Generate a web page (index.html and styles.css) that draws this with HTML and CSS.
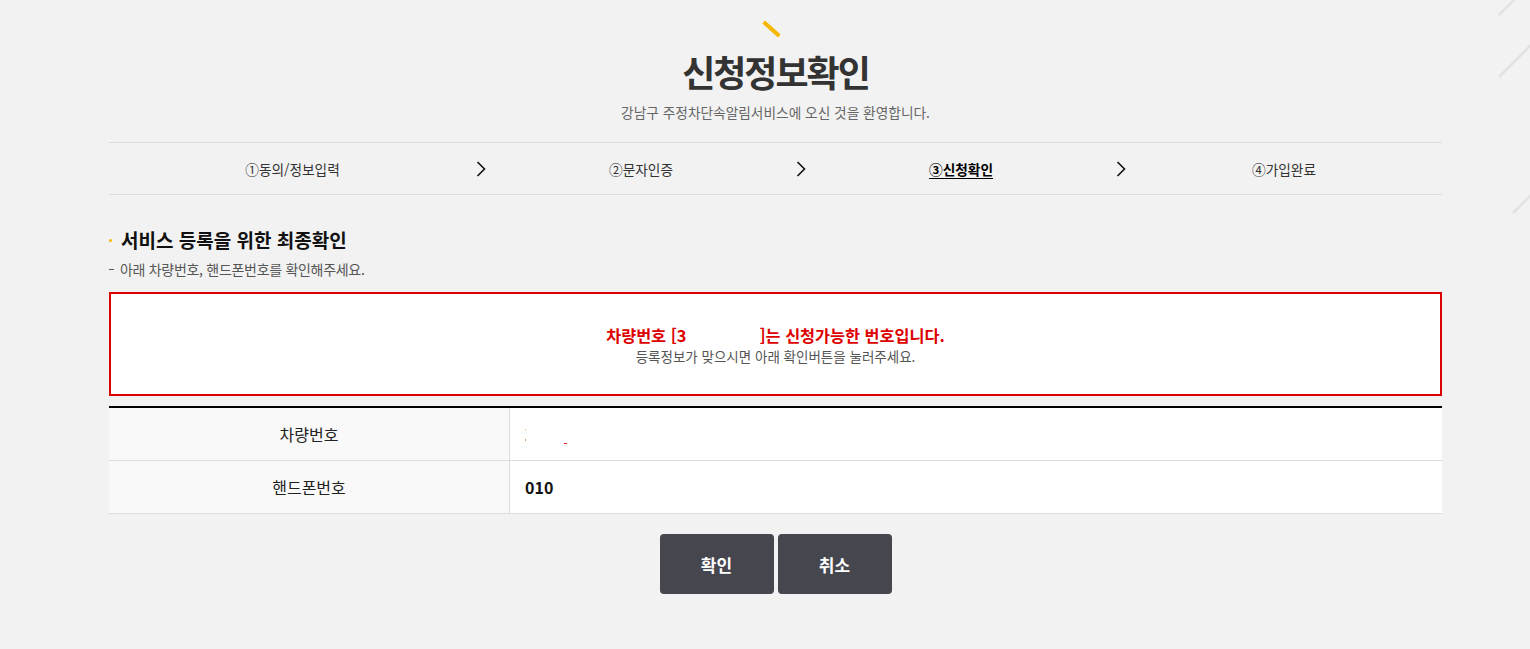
FILE: index.html
```html
<!DOCTYPE html>
<html lang="ko">
<head>
    <meta charset="UTF-8">
    <meta name="viewport" content="width=device-width, initial-scale=1.0">
    <title>신청정보확인</title>
    <link rel="stylesheet" href="styles.css">
</head>
<body>
    <svg class="deco" width="60" height="240" viewBox="0 0 60 240">
        <line x1="29" y1="15" x2="47" y2="-3" />
        <line x1="29" y1="77" x2="65" y2="41" />
        <line x1="43" y1="213" x2="65" y2="191" />
    </svg>

    <div class="wrap">
        <div class="page-head">
            <span class="slash"></span>
            <h1>신청정보확인</h1>
            <p class="welcome">강남구 주정차단속알림서비스에 오신 것을 환영합니다.</p>
        </div>

        <div class="steps">
            <span class="step">①동의/정보입력</span>
            <span class="arrow"><svg width="10" height="16" viewBox="0 0 10 16"><path d="M1.5 1 L8.5 8 L1.5 15" /></svg></span>
            <span class="step">②문자인증</span>
            <span class="arrow"><svg width="10" height="16" viewBox="0 0 10 16"><path d="M1.5 1 L8.5 8 L1.5 15" /></svg></span>
            <span class="step on">③신청확인</span>
            <span class="arrow"><svg width="10" height="16" viewBox="0 0 10 16"><path d="M1.5 1 L8.5 8 L1.5 15" /></svg></span>
            <span class="step">④가입완료</span>
        </div>

        <h2 class="sec-title">서비스 등록을 위한 최종확인</h2>
        <p class="sec-desc">아래 차량번호, 핸드폰번호를 확인해주세요.</p>

        <div class="notice">
            <p class="notice-main">차량번호 [3<span class="mask"></span>]는 신청가능한 번호입니다.</p>
            <p class="notice-sub">등록정보가 맞으시면 아래 확인버튼을 눌러주세요.</p>
        </div>

        <table class="info">
            <tr>
                <th>차량번호</th>
                <td><span class="speck s1"></span><span class="speck s2"></span><span class="speck s3"></span></td>
            </tr>
            <tr>
                <th>핸드폰번호</th>
                <td class="num">010</td>
            </tr>
        </table>

        <div class="btns">
            <button class="btn">확인</button>
            <button class="btn">취소</button>
        </div>
    </div>
</body>
</html>
```

FILE: styles.css
```css
body {
    margin: 0;
    background: #f2f2f2;
    color: #333;
    font-family: "Noto Sans CJK KR", "Noto Sans", sans-serif;
    position: relative;
    min-height: 649px;
}

.deco {
    position: absolute;
    top: 0;
    right: 0;
}

.deco line {
    stroke: #e2e2e2;
    stroke-width: 2.5;
}

.wrap {
    width: 1333px;
    margin: 0 0 0 109px;
}

.page-head {
    text-align: center;
    padding-top: 20px;
}

.slash {
    display: block;
    width: 21px;
    height: 4px;
    background: #f5b700;
    transform: rotate(42deg);
    margin: 7px auto 0 652px;
}

h1 {
    margin: 15px 0 0;
    font-size: 36px;
    font-weight: bold;
    letter-spacing: -2px;
    line-height: 50px;
    color: #333;
}

.welcome {
    margin: 6px 0 0;
    font-size: 13.7px;
    line-height: 20px;
    color: #666;
}

.steps {
    margin-top: 20px;
    border-top: 1px solid #dcdcdc;
    border-bottom: 1px solid #dcdcdc;
    height: 51px;
    display: grid;
    grid-template-columns: 367px 10px 310px 10px 310px 10px 1fr;
    align-items: center;
    font-size: 13.7px;
}

.step {
    text-align: center;
    color: #333;
}

.step.on {
    color: #000;
    font-weight: bold;
    text-decoration: underline;
    text-underline-offset: 3px;
}

.arrow {
    display: flex;
    justify-content: center;
}

.arrow path {
    fill: none;
    stroke: #111;
    stroke-width: 1.6;
}

.sec-title {
    position: relative;
    margin: 32px 0 0;
    padding-left: 12px;
    font-size: 19px;
    line-height: 26px;
    color: #111;
}

.sec-title::before {
    content: "";
    position: absolute;
    left: 0;
    top: 12px;
    width: 3px;
    height: 3px;
    border-radius: 50%;
    background: #f5b700;
}

.sec-desc {
    position: relative;
    margin: 6px 0 0;
    padding-left: 11px;
    font-size: 14px;
    line-height: 20px;
    color: #555;
    letter-spacing: -0.3px;
}

.sec-desc::before {
    content: "";
    position: absolute;
    left: 0;
    top: 10px;
    width: 5px;
    height: 1px;
    background: #555;
}

.notice {
    margin-top: 13px;
    border: 2px solid #dd0000;
    background: #fff;
    height: 100px;
    display: flex;
    flex-direction: column;
    justify-content: center;
    text-align: center;
}

.notice p {
    margin: 0;
}

.notice-main {
    font-size: 16.3px;
    font-weight: bold;
    color: #d00;
    line-height: 21px;
    margin-top: 2px !important;
}

.mask {
    display: inline-block;
    width: 73px;
}

.notice-sub {
    font-size: 13.5px;
    color: #555;
    line-height: 20px;
}

.info {
    margin-top: 10px;
    width: 100%;
    border-collapse: collapse;
    border-top: 2px solid #000;
    background: #fff;
}

.info th,
.info td {
    height: 52px;
    border-bottom: 1px solid #ddd;
    padding: 0;
    font-size: 16px;
}

.info th {
    width: 400px;
    background: #f9f9f9;
    border-right: 1px solid #ddd;
    font-weight: normal;
    color: #222;
}

.info td {
    padding-left: 15px;
    position: relative;
}

.info td.num {
    font-weight: bold;
    color: #111;
}

.speck {
    position: absolute;
    width: 1px;
    height: 2px;
}

.s1 { left: 15px; top: 21px; background: #f3c9a0; }
.s2 { left: 15px; top: 31px; background: #d99a50; }
.s3 { left: 54px; top: 35px; width: 3px; height: 1px; background: #d02020; }

.btns {
    margin-top: 20px;
    display: flex;
    justify-content: center;
    gap: 4px;
}

.btn {
    width: 114px;
    height: 60px;
    border: none;
    border-radius: 4px;
    background: #46464f;
    color: #fff;
    font-family: "Noto Sans CJK KR", sans-serif;
    font-size: 17px;
    font-weight: bold;
    cursor: pointer;
}
```
